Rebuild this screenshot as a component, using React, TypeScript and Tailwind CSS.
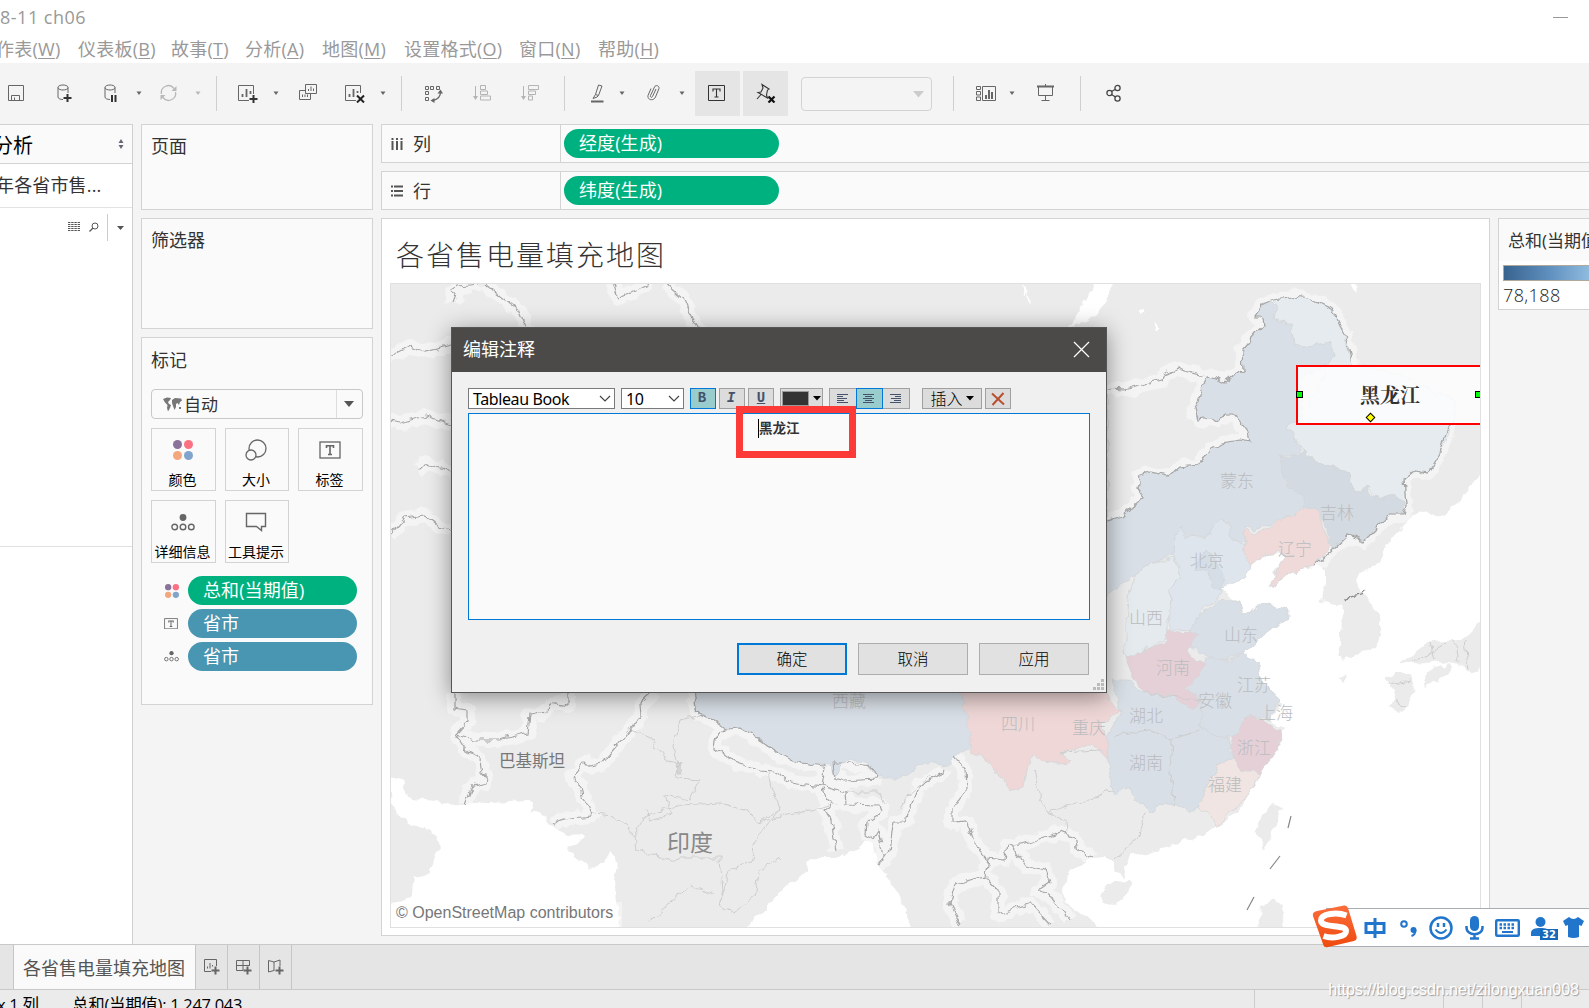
import React from 'react';

const UI = "font-['Open_Sans','Noto_Sans_CJK_SC',sans-serif]";

const menus: [string, string, string][] = [
  ['作表', 'W', 'w-[82px]'],
  ['仪表板', 'B', 'w-[93px]'],
  ['故事', 'T', 'w-[74px]'],
  ['分析', 'A', 'w-[77px]'],
  ['地图', 'M', 'w-[82px]'],
  ['设置格式', 'O', 'w-[115px]'],
  ['窗口', 'N', 'w-[79px]'],
  ['帮助', 'H', 'w-[80px]'],
];

function Ico({ w, h = 20, cls = '', children }: { w: number; h?: number; cls?: string; children: React.ReactNode }) {
  return (
    <svg width={w} height={h} viewBox={`0 0 ${w} ${h}`} className={`shrink-0 ${cls}`} fill="none" stroke="currentColor">
      {children}
    </svg>
  );
}

function Caret({ cls = '' }: { cls?: string }) {
  return (
    <Ico w={6} h={20} cls={cls}>
      <path d="M0.5 8.5h5L3 12z" fill="currentColor" stroke="none" />
    </Ico>
  );
}

function Sep({ cls }: { cls: string }) {
  return <div className={`h-[35px] w-px shrink-0 bg-[#cfcfcf] ${cls}`} />;
}

const cylinder = 'M1 4.5C1 2.6 4 2 6 2s5 .6 5 2.5S8 7 6 7 1 6.4 1 4.5V14c0 1.700 2.500 2.500 5 2.500M11 4.500V10';

function Toolbar() {
  return (
    <div className="flex h-[61px] shrink-0 items-center bg-[#f4f4f4] text-[#666] [&_svg]:-translate-y-px">
      <Ico w={17} cls="ml-2">
        <path d="M.5 2.500h15v15H.5zM3.500 17v-4.500h8V17M6.500 17v-2.500" />
      </Ico>
      <Ico w={15} cls="ml-8">
        <path d={cylinder} />
        <path d="M10.500 11v8M6.500 15h8" stroke="#333" strokeWidth="2" />
      </Ico>
      <Ico w={13} cls="ml-8">
        <path d={cylinder} />
        <path d="M8 12v7M11.500 12v7" stroke="#333" strokeWidth="2" />
      </Ico>
      <Caret cls="ml-[19px]" />
      <Ico w={17} cls="ml-[18px] text-[#b8b8b8]">
        <path d="M1.500 11A7 7 0 0 1 14 5.500M15.500 9A7 7 0 0 1 3 14.500" strokeWidth="1.300" />
        <path d="M16.500 3v5h-5zM.5 17v-5h5z" fill="currentColor" stroke="none" />
      </Ico>
      <Caret cls="ml-[18px] text-[#b8b8b8]" />
      <Sep cls="ml-[15px]" />
      <Ico w={20} cls="ml-[21px]">
        <path d="M11 17.500H.5v-15h15V11" />
        <path d="M4.500 14v-3M8.500 14V6M12.500 11V8" strokeWidth="1.800" />
        <path d="M15.500 12v8M11.500 16h8" stroke="#333" strokeWidth="2" />
      </Ico>
      <Caret cls="ml-[15px]" />
      <Ico w={18} cls="ml-5">
        <path d="M6.500 1.500h11v9h-11zM9.500 8V6M12 8V3.500M14.500 8V5.500M6 7.500H.5v9h11V11M3.500 14v-2.500M6 14v-2.500M8.500 14v-2.500" />
      </Ico>
      <Ico w={20} cls="ml-7">
        <path d="M11 17.500H.5v-15h15V10" />
        <path d="M4.500 14v-3M8.500 14V6M12.500 10V8" strokeWidth="1.800" />
        <path d="M12 12.500l7 7M19 12.500l-7 7" stroke="#222" strokeWidth="2" />
      </Ico>
      <Caret cls="ml-[15px]" />
      <Sep cls="ml-[15px]" />
      <Ico w={18} cls="ml-[23px]">
        <path d="M.5 3.500h3v3h-3zM5.500 3.500h3v3h-3zM11.500 3.500h3v3h-3zM.5 8.500h3v3h-3zM.5 14.500h3v3h-3z" />
        <path d="M15.500 9c0 4-2 7.500-8 8.500" strokeWidth="1.300" />
        <path d="M12.500 10.500l3-4 2.500 4zM9.500 15v5L5.500 17.500z" fill="currentColor" stroke="none" />
      </Ico>
      <Ico w={18} cls="ml-[30px] text-[#b4b4b4]">
        <path d="M2.500 3v13M7.500 2.500h5v4h-5zM7.500 8h7v3.500h-7zM7.500 13h10v4h-10z" />
        <path d="M0 13h5L2.500 17z" fill="currentColor" stroke="none" />
      </Ico>
      <Ico w={18} cls="ml-[30px] text-[#b4b4b4]">
        <path d="M2.500 3v13M7.500 2.500h10v4h-10zM7.500 8h7v3.500h-7zM7.500 13h4v4h-4z" />
        <path d="M0 13h5L2.500 17z" fill="currentColor" stroke="none" />
      </Ico>
      <Sep cls="ml-[25px]" />
      <Ico w={13} cls="ml-[26px]">
        <path d="M7.500 2l3.500 1-3.500 9.500-3-1zM4.500 11.500L2 15.500l4-1.500 1.500-1.500" />
        <path d="M0 18.500h12.500" strokeWidth="2" />
      </Ico>
      <Caret cls="ml-[15px]" />
      <Ico w={13} cls="ml-[22px]">
        <path d="M9 6l-3.500 7.500c-.6 1.500-2.600.8-2-1L7.500 4c1-2.500 5-1.500 4.500 1.500L8.500 14c-2 4.500-8.500 3-7.500-1.500L4 5.500" />
      </Ico>
      <Caret cls="ml-[19px]" />
      <div className="ml-[10px] flex h-[45px] w-[45px] shrink-0 items-center bg-[#e5e5e5] pl-[13px] text-[#333]">
        <Ico w={17}>
          <path d="M.5 2.500h16v15h-16z" />
          <path d="M5 8.500V6h7v2.500M8.500 6v8M6.500 14h4" strokeWidth="1.100" />
        </Ico>
      </div>
      <div className="ml-[3px] flex h-[45px] w-[45px] shrink-0 items-center justify-center bg-[#e5e5e5] text-[#333]">
        <Ico w={20}>
          <path d="M6 1.500l7 4.500-1.500 1-1 5 1 3L2 9.500l3-.5 2-4zM5 11.500L1 16" strokeWidth="1.100" />
          <path d="M12.500 13.500l6 6M18.500 13.500l-6 6" stroke="#111" strokeWidth="2.200" />
        </Ico>
      </div>
      <div className="ml-[13px] flex h-[34px] w-[131px] shrink-0 items-center justify-end rounded-sm border border-[#d3d3d3] pr-[7px] text-[#ccc]">
        <Ico w={11}>
          <path d="M0 8h11l-5.500 6.500z" fill="currentColor" stroke="none" />
        </Ico>
      </div>
      <Sep cls="ml-[21px]" />
      <Ico w={20} cls="ml-[22px]">
        <path d="M.5 3.500h4v3h-4zM.5 8.500h4v3.500h-4zM.5 14h4v3.500h-4zM6.500 3.500h13v14h-13z" />
        <path d="M10 16v-4M13 16V7M16 16V9" strokeWidth="2" />
      </Ico>
      <Caret cls="ml-[13px]" />
      <Ico w={17} cls="ml-[22px]">
        <path d="M0 3.500h17" strokeWidth="2" />
        <path d="M1.500 4v8.500h14V4M8.500 1v2M8.500 12.500v5M4.500 17.500h8" />
      </Ico>
      <Sep cls="ml-[26px]" />
      <Ico w={15} cls="ml-[25px] text-[#444]">
        <g strokeWidth="1.300">
          <circle cx="3.500" cy="10" r="2.600" />
          <circle cx="11.500" cy="5" r="2.600" />
          <circle cx="11.500" cy="15.500" r="2.600" />
          <path d="M5.500 8.500L9 6.500M5.500 11.500L9.500 14" />
        </g>
      </Ico>
    </div>
  );
}

function Pill({ label, cls }: { label: string; cls: string }) {
  return <div className={`flex h-[29px] items-center rounded-full pl-[15px] text-[18px] tracking-[0.1px] text-white ${cls}`}>{label}</div>;
}

function Dots({ s }: { s: number }) {
  return (
    <svg width={s} height={s} viewBox="0 0 20 20">
      <circle cx="4.500" cy="4.500" r="4.500" fill="#8a729a" />
      <circle cx="15.500" cy="4.500" r="4.500" fill="#fb7183" />
      <circle cx="4.500" cy="15.500" r="4.500" fill="#f4a77d" />
      <circle cx="15.500" cy="15.500" r="4.500" fill="#80a4cc" />
    </svg>
  );
}

function LabelIcon({ w }: { w: number }) {
  return (
    <svg width={w} height={(w * 18) / 22} viewBox="0 0 22 18" fill="none" stroke="#666" strokeWidth="1.300">
      <rect x="1" y="1" width="20" height="16" />
      <path d="M7.500 7V4.800h7V7M11 5v8.500M9 13.500h4" strokeWidth="1.600" />
    </svg>
  );
}

function DetailIcon({ w }: { w: number }) {
  return (
    <svg width={w} height={(w * 17) / 24} viewBox="0 0 24 17" fill="none" stroke="#666" strokeWidth="1.400">
      <circle cx="12" cy="3.500" r="3.400" fill="#666" stroke="none" />
      <circle cx="3.700" cy="13" r="2.800" />
      <circle cx="12" cy="13" r="2.800" />
      <circle cx="20.300" cy="13" r="2.800" />
    </svg>
  );
}

function MarkButton({ label, icon }: { label: string; icon: React.ReactNode }) {
  return (
    <div className="flex h-[63px] flex-col items-center border border-[#d3d3d3] pr-[2px] text-[14px] text-black">
      <div className="flex h-[42px] items-center">{icon}</div>
      <div className="-mt-px whitespace-nowrap leading-[20px]">{label}</div>
    </div>
  );
}

function Side() {
  return (
    <div className="flex w-[133px] shrink-0 flex-col overflow-hidden border-r border-t border-[#d0d0d0] bg-white text-[#333]">
      <div className="flex h-[39px] shrink-0 items-center border-b border-[#d3d3d3] bg-[#fafafa]">
        <div className="-ml-[7px] w-[124px] whitespace-nowrap pt-[3px] text-[20px] text-black">分析</div>
        <Ico w={8} h={12} cls="text-[#667]">
          <path d="M1.500 5l2.500-4 2.500 4zM1.500 7l2.500 4 2.500-4z" fill="currentColor" stroke="none" />
        </Ico>
      </div>
      <div className="flex h-[44px] shrink-0 items-center border-b border-[#e3e3e3]">
        <div className="-ml-[4px] whitespace-nowrap text-[18px] tracking-[0.15px]">年各省市售...</div>
      </div>
      <div className="flex h-[339px] shrink-0 items-start border-b border-[#e0e0e0] pt-[6px]">
        <Ico w={12} h={27} cls="ml-[68px]">
          <path d="M0 8.500h12M0 10.500h12M0 12.500h12M0 14.500h12M0 16.500h12" stroke="#555" strokeDasharray="2.400 .8" />
        </Ico>
        <Ico w={10} h={27} cls="ml-[9px]">
          <path d="M0.500 17.500l3.500-3.500" strokeWidth="1.300" stroke="#555" />
          <circle cx="6" cy="12" r="3" stroke="#555" />
        </Ico>
        <div className="ml-[8px] h-[27px] w-px bg-[#ccc]" />
        <Ico w={7} h={27} cls="ml-[9px]">
          <path d="M0 12h7l-3.500 4z" fill="#555" stroke="none" />
        </Ico>
      </div>
    </div>
  );
}

function Cards() {
  const card = 'shrink-0 border border-[#d3d3d3] bg-[#fafafa] px-[9px] text-[18px] text-[#333]';
  return (
    <div className="ml-2 flex w-[232px] shrink-0 flex-col gap-2">
      <div className={`${card} h-[86px] pt-[8px]`}>页面</div>
      <div className={`${card} h-[111px] pt-[8px]`}>筛选器</div>
      <div className={`${card} h-[368px] pt-[9px]`}>
        <div className="h-[42px]">标记</div>
        <div className="flex h-[30px] items-center rounded-sm border border-[#c8c8c8] pl-[11px]">
          <svg width="19" height="15" viewBox="0 0 19 15" fill="#777">
            <path d="M0 2l4-1.500 4 .5-1 2-2 2 1 2 2 1-1 3-2 3.500L4 11l.500-3L2 5.500zM9 3l3-2 6 .5 1 2-2 1.500-1 3-1.500-2-1.500 1 0 3-1.500 3-1.500-4-1-3zM16 10l2 0 0 2-2 0z" />
          </svg>
          <div className="ml-[2px] w-[152px] pt-px text-[17px]">自动</div>
          <div className="h-full w-px bg-[#ddd]" />
          <svg width="10" height="7" className="ml-[7px]">
            <path d="M0 0h10L5 6z" fill="#555" />
          </svg>
        </div>
        <div className="mt-[9px] grid grid-cols-[65px_64px_65px] gap-[9px]">
          <MarkButton label="颜色" icon={<Dots s={20} />} />
          <MarkButton
            label="大小"
            icon={
              <svg width="22" height="22" viewBox="0 0 22 22" fill="#fafafa" stroke="#666" strokeWidth="1.300">
                <circle cx="12.500" cy="9.500" r="8.500" />
                <circle cx="6" cy="16" r="5" />
              </svg>
            }
          />
          <MarkButton label="标签" icon={<LabelIcon w={22} />} />
          <MarkButton label="详细信息" icon={<DetailIcon w={24} />} />
          <MarkButton
            label="工具提示"
            icon={
              <svg width="22" height="20" viewBox="0 0 22 20" fill="none" stroke="#666" strokeWidth="1.400">
                <path d="M1.500 1.500h19v13h-4v4l-5-4h-10z" />
              </svg>
            }
          />
        </div>
        <div className="mt-[13px] grid grid-cols-[37px_169px] gap-y-1">
          <div className="flex items-center pl-[14px]"><Dots s={14} /></div>
          <Pill label="总和(当期值)" cls="bg-[#00b180]" />
          <div className="flex items-center pl-[13px]"><LabelIcon w={14} /></div>
          <Pill label="省市" cls="bg-[#4996b2]" />
          <div className="flex items-center pl-[13px]"><DetailIcon w={15} /></div>
          <Pill label="省市" cls="bg-[#4996b2]" />
        </div>
      </div>
    </div>
  );
}

function Shelf({ icon, label, pill }: { icon: React.ReactNode; label: string; pill: string }) {
  return (
    <div className="flex h-[39px] shrink-0 items-center border-y border-l border-[#d3d3d3] bg-[#fafafa] text-[18px] text-[#333]">
      <div className="flex h-full w-[179px] items-center gap-[10px] border-r border-[#d3d3d3] pl-[9px]">
        {icon}
        <span className="pt-[2px]">{label}</span>
      </div>
      <Pill label={pill} cls="ml-[3px] w-[215px] bg-[#00b180]" />
    </div>
  );
}

const seas = [
  'M385 775L402 779 406 797 420 799 462 805 490 803 530 801 533 812 541 812 548 823 556 829 565 837 584 836 577 845 565 847 578 860 590 870 605 865 607 856 611 850 617 867 614 880 617 900 622 935 385 935 385 908 413 895 415 876 428 872 441 847 430 829 412 826 400 818 392 803z',
  'M740 935L760 912 775 898 790 884 807 872 806 862 815 857 835 857 850 852 862 848 866 842 872 845 880 868 890 882 899 895 908 918 912 935z',
  'M1093 857L1105 856 1113 862 1116 873 1125 877 1124 865 1130 857 1150 852 1165 848 1175 843 1205 836 1212 828 1216 826 1225 820 1238 812 1248 798 1250 790 1257 782 1263 770 1271 757 1279 742 1281 730 1286 727 1270 722 1275 713 1283 705 1272 692 1262 680 1255 662 1244 653 1250 645 1262 632 1275 623 1289 618 1289 610 1275 607 1262 604 1250 612 1243 615 1240 602 1230 597 1222 588 1225 582 1240 577 1250 565 1265 553 1282 550 1283 560 1272 573 1275 583 1285 578 1297 571 1311 567 1325 568 1325 585 1320 600 1340 607 1345 612 1340 630 1340 645 1337 655 1345 660 1360 653 1375 648 1381 635 1381 620 1372 605 1357 586 1356 576 1370 568 1382 562 1387 545 1400 530 1412 515 1420 510 1432 516 1445 513 1460 503 1470 485 1490 465 1490 935 1100 935 1095 920 1075 912 1062 895 1070 870z',
];

const lakes = [
  'M1097 283L1114 283 1106 297 1104 306 1090 318 1080 326 1068 328 1075 318 1086 298z',
  'M1022 283l6 10-4 3zM1028 290l2 14-3-3zM1139 310l6-1-6 8zM1155 324l6 4-8 4zM1350 283l10 2-6 6z',
];

const islands = [
  'M1275 803L1281 806 1276 825 1270 840 1265 850 1262 840 1255 833 1260 820 1268 808z',
  'M1101 892L1112 883 1130 880 1131 885 1124 898 1115 905 1102 900z',
  'M1260 905L1270 900 1284 904 1282 915 1288 935 1258 935z',
  'M1338 678L1346 674 1348 677 1342 680z',
  'M1401 662L1415 652 1425 643 1445 641 1460 640 1470 632 1490 610 1490 660 1470 676 1462 665 1440 662 1420 665z',
  'M1423 680L1430 670 1450 664 1452 670 1438 680 1426 686z',
  'M1384 680L1395 674 1412 674 1415 688 1406 708 1398 714 1391 705 1395 692z',
];

const provinces: [string, string][] = [
  ['#d8dfe6', 'M1107 389L1107 521 1122 516 1130 509 1144 497 1138 488 1140 476 1150 473 1168 477 1180 467 1198 465 1207 452 1222 443 1240 440 1250 442 1248 432 1235 415 1224 415 1218 421 1212 418 1197 420 1194 410 1208 376 1226 382 1235 375 1243 370 1242 350 1252 338 1263 325 1261 316 1255 316 1264 303 1273 302 1278 307 1273 318 1291 325 1295 342 1303 347 1322 342 1330 342 1336 354 1331 363 1300 380 1300 420 1289 428 1295 440 1302 447 1298 455 1280 455 1285 480 1302 495 1303 508 1297 515 1285 517 1255 530 1248 525 1244 527 1246 540 1240 543 1232 542 1228 522 1222 520 1212 525 1212 533 1185 537 1180 528 1175 535 1174 555 1152 563 1133 577 1120 585 1090 610 1100 525 1107 521z'],
  ['#e5ebef', 'M1275 300L1298 296 1311 299 1333 310 1340 325 1352 363 1400 375 1455 400 1452 423 1446 440 1440 453 1428 473 1414 470 1404 478 1406 505 1393 494 1376 500 1366 483 1360 493 1350 480 1348 472 1330 467 1313 463 1306 450 1297 443 1288 427 1300 420 1330 364 1336 354 1330 342 1303 347 1295 342 1291 325 1273 318 1278 307z'],
  ['#d4dae1', 'M1280 455L1290 457 1306 450 1313 463 1330 467 1348 472 1350 480 1360 493 1366 483 1368 495 1376 500 1393 494 1404 502 1403 515 1390 515 1375 530 1364 541 1347 536 1332 550 1327 530 1318 512 1303 508 1302 495 1290 488 1283 475z'],
  ['#efdad9', 'M1244 527L1248 530 1255 535 1285 517 1297 515 1303 505 1318 512 1322 525 1331 546 1312 567 1297 571 1280 580 1270 587 1275 573 1283 560 1282 552 1270 552 1255 563 1250 565 1240 550 1246 540z'],
  ['#dee5ed', 'M1175 535L1182 528 1185 537 1200 536 1212 533 1212 525 1222 520 1230 525 1232 542 1243 545 1245 558 1252 567 1243 580 1230 583 1222 588 1218 600 1205 605 1196 625 1190 632 1170 628 1168 610 1173 600 1168 590 1180 578 1178 565 1174 555z'],
  ['#d5dee6', 'M1193 570L1205 550 1215 560 1222 572 1226 582 1220 590 1212 587 1210 573z'],
  ['#e4eaed', 'M1133 577L1140 572 1152 563 1175 558 1180 578 1168 590 1172 600 1167 625 1168 638 1150 648 1124 658 1126 640 1126 620 1128 598z'],
  ['#d8dfe6', 'M1190 632L1200 615 1213 605 1222 600 1240 602 1243 615 1250 612 1262 604 1289 610 1289 618 1262 635 1244 653 1230 658 1215 660 1205 655 1188 645z'],
  ['#d8dfe6', 'M1205 658L1230 660 1244 653 1258 665 1264 685 1280 700 1270 720 1250 715 1240 737 1225 738 1200 730 1198 700 1188 690 1200 672z'],
  ['#d8dfe6', 'M1112 680L1130 680 1140 692 1170 695 1187 708 1200 700 1202 730 1230 740 1229 750 1234 757 1217 765 1208 785 1198 808 1188 813 1178 805 1165 803 1150 812 1134 800 1132 788 1112 793 1110 770 1104 740 1120 715 1116 690z'],
  ['#e6d0d7', 'M1169 630L1190 634 1200 634 1186 650 1198 660 1207 665 1200 672 1186 690 1198 695 1197 705 1187 708 1170 695 1145 693 1135 680 1125 658 1150 648 1167 642z'],
  ['#e6d0d7', 'M1250 714L1262 720 1268 725 1280 730 1281 745 1270 760 1262 773 1240 770 1234 757 1229 745 1240 728z'],
  ['#f0e5e2', 'M1234 757L1240 770 1262 773 1250 790 1245 800 1230 812 1216 828 1210 815 1198 808 1208 785 1217 765z'],
  ['#d8dfe6', 'M690 680L697 713 710 718 727 729 740 728 760 740 780 755 800 763 830 765 836 775 845 760 865 762 875 778 900 778 915 768 935 762 950 765 958 755 970 748 975 680z'],
  ['#efd7d7', 'M958 680L967 720 972 755 980 752 995 768 1003 780 1010 791 1023 788 1026 770 1034 755 1045 762 1065 765 1070 762 1060 752 1090 745 1100 750 1107 758 1108 745 1102 725 1120 712 1110 700 1098 680z'],
];

const borders = [
  'M1085 380L1107 389 1125 390 1150 383 1162 380 1165 374 1178 368 1190 373 1208 376 1226 382 1235 375 1243 370 1242 350 1252 338 1263 325 1261 316 1255 316 1264 303 1275 300 1298 296 1311 299 1320 304 1333 310 1340 325 1348 345 1352 363',
  'M1208 376L1194 410 1197 420 1212 418 1218 421 1224 415 1235 415 1248 432 1250 442 1240 440 1222 443 1207 452 1198 465 1180 467 1168 477 1150 473 1140 476 1138 488 1144 497 1130 509 1122 516 1107 521',
  'M1452 423L1446 432 1440 453 1428 473 1414 470 1404 478 1406 505 1403 515 1390 515 1375 530 1364 541 1347 536 1332 550 1312 567',
  'M454 692L454 708 467 710 467 722 456 734 475 740 500 740 528 733 530 715 545 712 555 703 568 705 568 692',
  'M456 734L466 750 480 758 482 775 487 776 486 783 472 786 465 805',
  'M654 692L640 705 641 715 630 730 618 745 602 764 588 766 584 762 572 778 580 785 582 798 590 808 592 816 562 819 554 824',
  'M726 729L716 738 715 748 735 762 760 771 775 772 790 782 822 786 825 768 826 765',
  'M692 685L697 713 710 718 727 729 740 728 760 740 780 755 800 763 825 766',
  'M833 762L835 778 845 781 876 779 870 766 842 762z',
  'M822 786L835 790 845 793 846 804 880 805 882 812 867 822 866 834 873 838 878 830 884 862 880 864 890 850 895 822 905 822 920 785 942 773 944 768',
  'M822 788L825 798 835 804 824 810 831 820 836 850',
  'M955 757L965 770 966 790 952 810 952 823 967 822 975 845 988 858 1005 860 1008 846 1030 842 1060 832 1075 838 1078 850 1092 857',
  'M1012 846L1025 865 1045 870 1050 882 1038 890 1055 900 1070 920',
  'M988 858L985 876 955 884 950 903 960 925M985 876L998 890 998 915 1030 903 1050 925',
];

const faintBorders = [
  'M630 730L650 738 665 760 680 765 677 778 700 780 690 800 665 795 672 815 650 822 645 810',
  'M592 813L612 815 635 835 637 850 665 860 680 858 720 858 723 890 720 905 735 912',
  'M635 835L645 815 680 805 720 803 750 812 758 823 780 810 772 790 768 773',
  'M700 715L680 720 674 745 680 775M735 912L755 895 760 870 780 858M645 925L690 885 715 895',
  'M758 823L830 805M780 810L755 840 752 860 730 870 720 905',
  'M846 792L880 792 885 805M900 810L905 798 930 775',
  'M1034 770L1040 800 1047 812 1090 800 1112 790M1066 832L1065 820 1047 812M1145 812L1140 835 1115 858',
  'M1100 750L1060 752M1115 735L1150 730 1170 740 1200 730M1172 740L1170 775 1175 805M1145 693L1200 700',
  'M1412 662L1425 655 1445 643M1430 643L1435 660M1465 640L1468 670M1387 684L1412 680M1455 640L1458 662M1395 700L1405 706',
];

const upperBorders = [
  'M453 304L456 296 452 290 458 286 480 284M612 283L618 298 632 292 650 283M665 283L684 300 692 320 700 332M485 283L500 296 520 312 530 335',
  'M385 358L398 352 410 346 425 352 452 345M385 420L400 423 425 416 452 424M390 535L405 518 425 515 440 528 452 530M418 470L425 463 452 472',
];

const labels: [string, number, number][] = [
  ['蒙东', 1220, 481], ['吉林', 1320, 513], ['辽宁', 1278, 549], ['北京', 1190, 561],
  ['山西', 1129, 618], ['山东', 1224, 635], ['河南', 1156, 668], ['江苏', 1237, 685],
  ['安徽', 1198, 701], ['湖北', 1129, 716], ['上海', 1259, 713], ['浙江', 1237, 748],
  ['湖南', 1129, 763], ['福建', 1208, 785], ['四川', 1001, 724], ['重庆', 1072, 728], ['西藏', 832, 701],
];

function MapView() {
  return (
    <div className="relative h-[645px] w-[1091px] overflow-hidden border border-[#e0e0e0]">
      <svg width="1089" height="643" viewBox="391 284 1089 643" fill="none">
        <defs>
          <filter id="rough" x="0" y="0" width="100%" height="100%">
            <feTurbulence type="fractalNoise" baseFrequency="0.1" numOctaves="2" seed="4" />
            <feDisplacementMap in="SourceGraphic" scale="9" xChannelSelector="R" yChannelSelector="G" />
          </filter>
        </defs>
        <g filter="url(#rough)">
          <rect x="380" y="270" width="1120" height="670" fill="#ebebeb" />
          {[...borders, ...upperBorders].map((d) => (
            <path key={d} d={d} stroke="#f4f4f4" strokeWidth="14" strokeLinejoin="round" />
          ))}
          {[...seas, ...lakes].map((d) => (
            <path key={d} d={d} fill="#fff" />
          ))}
          {islands.map((d) => (
            <path key={d} d={d} fill="#ebebeb" />
          ))}
          {provinces.map(([c, d]) => (
            <path key={d} d={d} fill={c} stroke="#d3d6d8" strokeWidth="0.800" />
          ))}
          {faintBorders.map((d) => (
            <path key={d} d={d} stroke="#c9c9c9" strokeWidth="0.900" />
          ))}
          {[...borders, ...upperBorders].map((d) => (
            <path key={d} d={d} stroke="#a6a6a6" strokeWidth="1.200" />
          ))}
          <path d="M1344 603L1350 596 1362 594 1366 590" stroke="#888" strokeWidth="1.300" />
        </g>
        <path d="M1288 828L1291 816M1270 869L1280 856M1247 910L1254 897" stroke="#888" strokeWidth="1.200" />
      </svg>
      {labels.map(([t, x, y]) => (
        <div
          key={t}
          className="absolute whitespace-nowrap font-['Noto_Sans_CJK_SC',sans-serif] text-[17px] leading-[20px] font-light text-[#babcbf]"
          style={{ left: x - 391, top: y - 295 }}
        >
          {t}
        </div>
      ))}
      <div className="absolute left-[108px] top-[467px] text-[16.5px] leading-[20px] text-[#777]">巴基斯坦</div>
      <div className="absolute left-[276px] top-[544px] text-[23px] leading-[28px] text-[#888]">印度</div>
      <div className="absolute left-0 top-[618px] h-[25px] w-[231px] bg-white/40 pl-[5px] font-['Liberation_Sans',sans-serif] text-[16px] leading-[21px] text-[#777]">
        © OpenStreetMap contributors
      </div>
      <div className="absolute left-[905px] top-[81px] flex h-[60px] w-[190px] items-center border-2 border-[#f00] bg-white/80 pl-[62px] font-['Noto_Serif_CJK_SC','Noto_Sans_CJK_SC',serif] text-[20px] font-bold text-[#333]">
        黑龙江
        <div className="absolute left-[-2px] top-[24px] h-[7px] w-[7px] border border-black bg-[#0f0]" />
        <div className="absolute left-[177px] top-[24px] h-[7px] w-[7px] border border-black bg-[#0f0]" />
        <div className="absolute left-[69px] top-[47px] h-[7px] w-[7px] rotate-45 border border-black bg-[#ff0]" />
      </div>
    </div>
  );
}

function Combo({ text, cls }: { text: string; cls: string }) {
  return (
    <div className={`flex h-[21px] items-center justify-between border border-[#7a7a7a] bg-white pl-[4px] pr-[3px] pt-px font-['Noto_Sans',sans-serif] text-[16px] tracking-[-0.4px] text-black ${cls}`}>
      <span className="whitespace-nowrap">{text}</span>
      <svg width="12" height="8" className="-mt-px" fill="none" stroke="#444" strokeWidth="1.200">
        <path d="M1 1l5 5 5-5" />
      </svg>
    </div>
  );
}

const fmt = 'flex h-[21px] items-center justify-center border text-[#44536b]';
const off = 'border-[#a0a0a0] bg-[#dcdcdc]';
const on = 'border-[#0078d7] bg-[#99cccc]';

function Align({ d }: { d: string }) {
  return (
    <svg width="11" height="10" className="-translate-x-px" stroke="#44536b">
      <path d={d} />
    </svg>
  );
}

const alignLines = {
  left: 'M0 .5h11M0 2.500h6M0 4.500h10M0 6.500h7M0 8.500h11',
  center: 'M0 .5h11M2 2.500h7M0 4.500h11M2 6.500h7M0 8.500h11',
  right: 'M0 .5h11M5 2.500h6M1 4.500h10M4 6.500h7M0 8.500h11',
};

function Dialog() {
  const btn = 'flex h-[32px] w-[110px] items-center justify-center bg-[#e1e1e1] pt-[2px] text-[15.5px] font-light text-black';
  return (
    <div className="absolute left-[451px] top-[327px] flex h-[366px] w-[656px] flex-col border border-[#555] bg-[#f0f0f0] shadow-[0_4px_22px_rgba(0,0,0,0.42)]">
      <div className="flex h-[44px] shrink-0 items-center justify-between bg-[#4b4a48] pb-[2px] pl-[11px] pr-[16px] text-[18px] text-white">
        编辑注释
        <svg width="17" height="17" fill="none" stroke="#fff" strokeWidth="1.200">
          <path d="M1 1l15 15M16 1L1 16" />
        </svg>
      </div>
      <div className="flex h-[41px] shrink-0 items-center pl-[16px] pt-[12px]">
        <div className="flex items-center">
          <Combo text="Tableau Book" cls="w-[147px]" />
          <Combo text="10" cls="ml-[6px] w-[63px]" />
          <div className={`${fmt} ${on} ml-[6px] w-[26px] pr-[2px] font-['Liberation_Mono'] text-[14px] font-bold`}>B</div>
          <div className={`${fmt} ${off} ml-[3px] w-[26px] pr-[2px] font-['Liberation_Mono'] text-[14px] font-bold italic`}>I</div>
          <div className={`${fmt} ${off} ml-[3px] w-[26px] font-['Liberation_Mono'] text-[14px] font-bold underline`}>U</div>
          <div className={`${fmt} ${off} ml-[6px] w-[43px] gap-[4px]`}>
            <div className="h-[15px] w-[27px] border border-[#999] bg-[#333]" />
            <svg width="8" height="5"><path d="M0 0h8L4 4.500z" fill="#000" /></svg>
          </div>
          <div className={`${fmt} ${off} ml-[6px] w-[28px]`}><Align d={alignLines.left} /></div>
          <div className={`${fmt} ${on} relative -ml-px w-[27px]`}><Align d={alignLines.center} /></div>
          <div className={`${fmt} ${off} -ml-px w-[28px]`}><Align d={alignLines.right} /></div>
          <div className={`${fmt} ${off} ml-[12px] w-[60px] gap-[3px] text-[16px] font-light !text-black`}>
            <span>插入</span>
            <svg width="8" height="5"><path d="M0 0h8L4 4.500z" fill="#000" /></svg>
          </div>
          <div className={`${fmt} ${off} ml-[3px] w-[26px]`}>
            <svg width="14" height="14" fill="none" stroke="#b8502f" strokeWidth="2"><path d="M1 1.500l12 11M12.500 1L1.500 13" /></svg>
          </div>
        </div>
      </div>
      <div className="ml-[16px] h-[207px] w-[622px] shrink-0 border border-[#0078d7] bg-[#fafafa]">
        <div className="ml-[289px] mt-[5px] flex h-[19px] w-max items-center border-l border-black text-[13.500px] font-bold text-[#333]">黑龙江</div>
      </div>
      <div className="mt-[23px] flex gap-[11px] pl-[285px]">
        <div className={`${btn} border-2 border-[#0078d7]`}>确定</div>
        <div className={`${btn} border border-[#adadad]`}>取消</div>
        <div className={`${btn} border border-[#adadad]`}>应用</div>
      </div>
      <svg width="11" height="11" className="absolute bottom-[2px] right-[2px]" fill="#bbb">
        <path d="M8 0h3v3H8zM4 4h3v3H4zM8 4h3v3H8zM0 8h3v3H0zM4 8h3v3H4zM8 8h3v3H8z" />
      </svg>
      <div className="absolute left-[284px] top-[78px] h-[52px] w-[120px] border-[7px] border-[#fc3a38]" />
    </div>
  );
}

function Ime() {
  return (
    <div className="absolute left-[1326px] top-[908px] flex h-[39px] w-[263px] items-center border-y border-[#a9adb5] bg-white pl-[38px] text-[#2176cb]">
      <svg width="46" height="44" viewBox="0 0 46 44" className="absolute left-[-14px] top-[-4px]">
        <defs>
          <linearGradient id="ime" x1="0" y1="0" x2="0" y2="1">
            <stop offset="0" stopColor="#fb6d3c" />
            <stop offset="1" stopColor="#ef4a0d" />
          </linearGradient>
        </defs>
        <path d="M5 6L32 .5Q35 0 36 3L44.500 31Q45.500 35 42 36L16 42Q12 43 11 39L1 11Q0 7 5 6z" fill="url(#ime)" />
        <path d="M34.500 10.500C25 7 9 8.500 9 15.500c0 8.500 25 3 25 10.500 0 6-14 8-22.500 5" fill="none" stroke="#fff" strokeWidth="6" />
      </svg>
      <svg width="22" height="22" fill="none" stroke="currentColor" strokeWidth="3">
        <path d="M2 6.500h18v9H2zM11 1v20" />
      </svg>
      <svg width="18" height="20" className="ml-[14px]" fill="none" stroke="currentColor">
        <circle cx="4" cy="6" r="2.800" strokeWidth="2" />
        <circle cx="13.500" cy="12" r="3" fill="currentColor" stroke="none" />
        <path d="M15.500 12c0 3-1 5-4 6" strokeWidth="2" />
      </svg>
      <svg width="24" height="24" className="ml-[11px]" fill="none" stroke="currentColor" strokeWidth="2.500">
        <circle cx="12" cy="12" r="10.500" />
        <path d="M6.500 13.500q5.500 7 11 0" strokeWidth="2" />
        <path d="M9 7v4M15 7v4" />
      </svg>
      <svg width="19" height="24" className="ml-[12px]" fill="none" stroke="currentColor" strokeWidth="2.500">
        <rect x="5" y="0" width="9" height="15" rx="4.500" fill="currentColor" stroke="none" />
        <path d="M1.500 10v1.500c0 9 16 9 16 0V10M9.500 18v4M5 22.500h9" />
      </svg>
      <svg width="25" height="18" className="ml-[11px]" fill="none" stroke="currentColor" strokeWidth="2">
        <rect x="1.200" y="1.200" width="22.600" height="15.600" rx="1" strokeWidth="2.400" />
        <path d="M4.500 5.500h16M4.500 9h16" strokeDasharray="2.500 1.500" strokeWidth="2.500" />
        <path d="M7 13h11" />
      </svg>
      <div className="relative ml-[11px] h-[24px] w-[28px]">
        <svg width="20" height="22" fill="currentColor">
          <circle cx="9.500" cy="6" r="5" />
          <path d="M0 20v-3c0-4 4-5 9.500-5s9 1 9 5v3z" />
        </svg>
        <div className="absolute bottom-0 left-[9px] h-[11px] w-[18px] bg-[#1668b8] text-center font-['DejaVu_Sans'] text-[10px] font-bold leading-[11px] text-white">32</div>
      </div>
      <svg width="21" height="21" className="ml-[4px] shrink-0" viewBox="0 0 21 21" fill="currentColor">
        <path d="M6 0q4.500 4 9 0l6 4-2.500 5-2.500-1v12q-5.500 2-11 0V8L2.500 9 0 4z" />
      </svg>
    </div>
  );
}

function NewTab({ d }: { d: string }) {
  return (
    <div className="flex h-full w-[32px] items-center justify-center border-r border-[#c6c6c6] pl-px">
      <svg width="16" height="16" fill="none" stroke="#666">
        <path d={d} />
        <path d="M11.500 7.500v8M7.500 11.500h8" strokeWidth="2" />
      </svg>
    </div>
  );
}

export default function App() {
  return (
    <div className={`relative flex h-[1008px] w-[1589px] flex-col overflow-hidden bg-[#f4f4f4] ${UI}`}>
      <div className="flex h-[34px] shrink-0 items-center justify-between bg-white pr-[21px] text-[18px] tracking-[0.5px] text-[#999]">
        <span>8-11 ch06</span>
        <span className="h-px w-[15px] bg-[#999]" />
      </div>
      <div className="flex h-[29px] shrink-0 items-center bg-white pt-[2px] text-[18px] tracking-[0.25px] text-[#999]">
        {menus.map(([t, k, w], i) => (
          <div key={k} className={`shrink-0 whitespace-nowrap ${w} ${i === 0 ? '-ml-[4px]' : ''}`}>
            {t}(<span className="underline underline-offset-2">{k}</span>)
          </div>
        ))}
      </div>
      <Toolbar />
      <div className="flex h-[820px] shrink-0">
        <Side />
        <Cards />
        <div className="ml-2 flex min-w-0 flex-1 flex-col gap-2">
          <Shelf
            icon={<Ico w={12} h={12}><path d="M1.500 3v9M6 3v9M10.500 3v9M1.500 0v2M6 0v2M10.500 0v2" stroke="#555" strokeWidth="2" /></Ico>}
            label="列"
            pill="经度(生成)"
          />
          <Shelf
            icon={<Ico w={12} h={12}><path d="M3 1.500h9M3 6h9M3 10.500h9M0 1.500h2M0 6h2M0 10.500h2" stroke="#555" strokeWidth="2" /></Ico>}
            label="行"
            pill="纬度(生成)"
          />
          <div className="flex items-start gap-[8px]">
            <div className="h-[718px] w-[1109px] shrink-0 border border-[#d3d3d3] bg-white pl-[8px]">
              <div className="flex h-[64px] items-center pl-[6px] pt-[8px] text-[28px] font-light tracking-[2px] text-[#333]">各省售电量填充地图</div>
              <MapView />
            </div>
            <div className="h-[92px] flex-1 overflow-hidden border-y border-l border-[#d3d3d3] bg-white text-[17px] text-[#333]">
              <div className="flex h-[42px] items-center whitespace-nowrap bg-[#fafafa] pl-[9px] pt-[2px]">总和(当期值)</div>
              <div className="ml-[4px] mt-[4px] h-[16px] w-[200px] border border-[#b0a999] bg-[linear-gradient(90deg,#39638f_0px,#5f8fbe_45px,#8fbcdf_86px,#c5dcec_200px)]" />
              <div className="pl-[4px] font-['Open_Sans'] text-[18px] font-light leading-[28px] tracking-[0.4px] text-[#222]">78,188</div>
            </div>
          </div>
        </div>
      </div>
      <div className="flex h-[46px] shrink-0 border-y border-[#c9c9c9] bg-[#e5e5e5]">
        <div className="ml-[13px] flex w-[183px] items-center border-x border-[#c6c6c6] bg-[#fafafa] pl-[9px] pt-[2px] text-[18px] text-[#555]">各省售电量填充地图</div>
        <NewTab d="M7 12.500H.5V.5h12V7M3.500 9.500v-2M6 9.500V4M8.500 7.500V6" />
        <NewTab d="M7 11.500H.5V1.500h13V7M.5 6.500h13M7 1.500v10" />
        <NewTab d="M6 11.500L.5 13V1.500L6 3l6-2v6M6 3v9" />
      </div>
      <div className="flex h-[18px] shrink-0 items-start overflow-hidden whitespace-nowrap bg-[#ebebeb] text-[16.500px] tracking-[-0.3px] text-black">
        <div className="-ml-[3px] w-[75px] pt-[3px]">x 1 列</div>
        <div className="w-[1182px] pt-[3px]">总和(当期值): 1,247,043</div>
        <div className="h-full w-[189px] border-l border-[#ccc]" />
        <div className="h-full w-[39px] border-l border-[#ccc]" />
        <div className="h-full w-[39px] border-l border-[#ccc]" />
        <div className="h-full w-[68px] border-l border-[#ccc]" />
      </div>
      <Dialog />
      <Ime />
      <div className="absolute right-[10px] top-[979px] font-['Liberation_Sans',sans-serif] text-[16px] leading-[22px] text-white [text-shadow:1px_1px_1px_#999]">
        https://blog.csdn.net/zilongxuan008
      </div>
    </div>
  );
}
